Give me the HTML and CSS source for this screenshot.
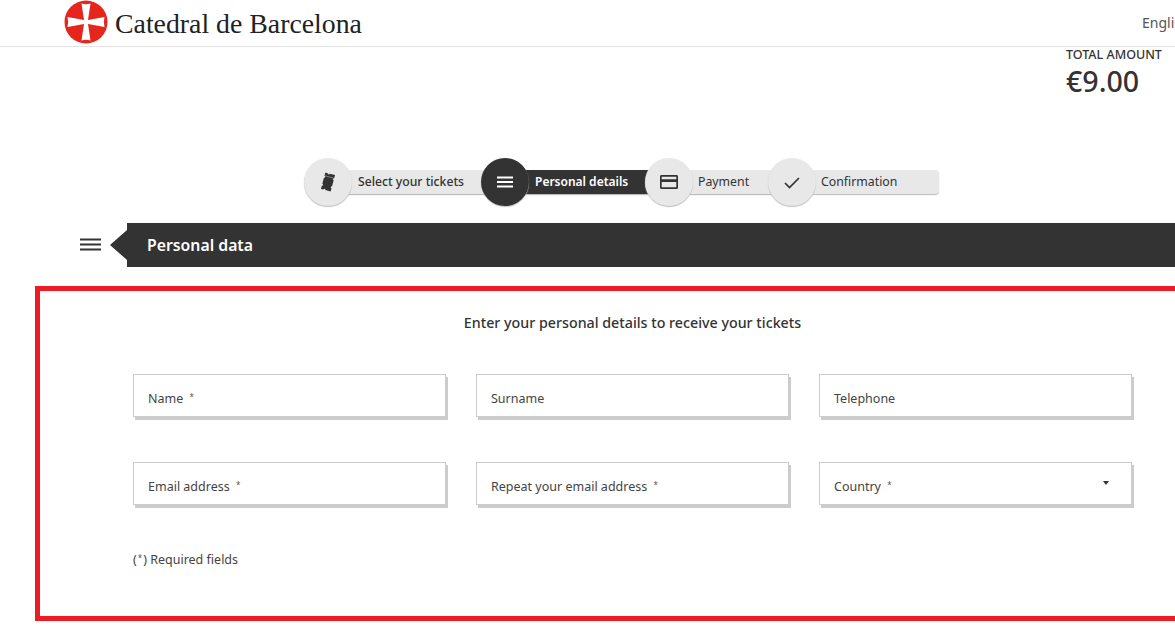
FILE: index.html
```html
<!DOCTYPE html>
<html lang="en">
<head>
  <meta charset="UTF-8" />
  <meta name="viewport" content="width=device-width, initial-scale=1.0" />
  <title>Catedral de Barcelona - Personal details</title>
  <link rel="stylesheet" href="styles.css">
</head>
<body>
  <header class="topbar">
    <div class="brand">
      <svg class="brand-logo" viewBox="0 0 44 44" aria-hidden="true">
        <circle cx="22" cy="22" r="21.500" fill="#e4261d"/>
        <path fill="#fff" d="M17.500 3.500 Q22 4.800 26.500 3.500 L24 20 L40.500 17 Q39.200 22 40.500 27 L24 24 L26.500 40.500 Q22 39.200 17.500 40.500 L20 24 L3.500 27 Q4.800 22 3.500 17 L20 20 Z"/>
      </svg>
      <span class="brand-name">Catedral de Barcelona</span>
    </div>
    <span class="lang">English</span>
  </header>

  <div class="total">
    <p class="total-label">TOTAL AMOUNT</p>
    <p class="total-value">€9.00</p>
  </div>

  <ol class="steps">
    <li class="step step-tickets">
      <span class="step-icon">
        <svg viewBox="0 0 24 24" width="24" height="24"><g transform="rotate(15 12 12)"><path fill="#333" d="M7 3.500h2.500a1 1 0 0 0 2 0H17v3.300a1 1 0 0 0 0 2v6.400a1 1 0 0 0 0 2v3.300h-5.500a1 1 0 0 0-2 0H7v-3.300a1 1 0 0 0 0-2V8.800a1 1 0 0 0 0-2z"/><path stroke="#8a8a8a" stroke-width=".8" d="M7.500 6.800h9"/></g></svg>
      </span>
      <span class="step-label">Select your tickets</span>
    </li>
    <li class="step step-active step-details">
      <span class="step-icon">
        <svg viewBox="0 0 24 24" width="24" height="24"><path fill="none" stroke="#fff" stroke-width="1.800" d="M4 7.500h16M4 12h16M4 16.500h16"/></svg>
      </span>
      <span class="step-label">Personal details</span>
    </li>
    <li class="step step-payment">
      <span class="step-icon">
        <svg viewBox="0 0 24 24" width="24" height="24"><path fill="#333" d="M4.500 5h15c.9 0 1.500.6 1.500 1.500v11c0 .9-.6 1.500-1.500 1.500h-15c-.9 0-1.500-.6-1.500-1.500v-11C3 5.600 3.600 5 4.500 5zm.2 1.800v2.400h14.600V6.800H4.700zm0 5.200v5.200h14.600V12H4.700z"/></svg>
      </span>
      <span class="step-label">Payment</span>
    </li>
    <li class="step step-confirm">
      <span class="step-icon">
        <svg viewBox="0 0 24 24" width="24" height="24"><path fill="none" stroke="#333" stroke-width="1.700" d="M5 13l4.500 4.500L19 8"/></svg>
      </span>
      <span class="step-label">Confirmation</span>
    </li>
  </ol>

  <div class="section-head">
    <svg class="section-menu" viewBox="0 0 22 14" width="22" height="14"><path fill="none" stroke="#333" stroke-width="1.800" d="M0 1.500h21M0 6.500h21M0 11.500h21"/></svg>
    <h2 class="section-title">Personal data</h2>
  </div>

  <form class="details-box">
    <p class="details-intro">Enter your personal details to receive your tickets</p>
    <div class="fields">
      <label class="field">Name <sup>*</sup></label>
      <label class="field">Surname</label>
      <label class="field">Telephone</label>
      <label class="field">Email address <sup>*</sup></label>
      <label class="field">Repeat your email address <sup>*</sup></label>
      <label class="field field-select">Country <sup>*</sup></label>
    </div>
    <p class="required-note">(<sup>*</sup>) Required fields</p>
  </form>
</body>
</html>
```

FILE: styles.css
```css
:root {
  --dark: #333333;
  --step-bg: #e8e8e8;
  --line: #cccccc;
  --red: #ed1c24;
  --font: 'Noto Sans', sans-serif;
}
* {
  box-sizing: border-box;
}
html, body {
  overflow: hidden;
}
body {
  margin: 0;
  height: 627px;
  background: #fff;
  color: var(--dark);
  font-family: var(--font);
  font-size: 12.300px;
}
p {
  margin: 0;
}

/* top bar */
.topbar {
  display: flex;
  align-items: center;
  justify-content: space-between;
  height: 47px;
  padding: 0 0 2px 64px;
  border-bottom: 1px solid #e2e2e2;
}
.brand {
  display: flex;
  align-items: center;
  gap: 7px;
}
.brand-logo {
  width: 44px;
  height: 44px;
}
.brand-name {
  padding-top: 3px;
  font-family: 'Liberation Serif', serif;
  font-size: 27.800px;
  color: #222;
  white-space: nowrap;
}
.lang {
  flex: none;
  width: 33px;
  overflow: hidden;
  font-size: 14px;
  color: #555;
  white-space: nowrap;
}

/* amount */
.total {
  margin-left: 1066px;
  width: 109px;
  height: 111px;
  white-space: nowrap;
}
.total-label {
  font-size: 12.500px;
  font-weight: 500;
  line-height: 16px;
}
.total-value {
  margin-top: 2px;
  font-size: 28.600px;
  font-weight: 500;
  line-height: 32px;
}

/* steps */
.steps {
  display: flex;
  list-style: none;
  margin: 0 0 17px 304px;
  padding: 0;
  height: 48px;
}
.step {
  position: relative;
  display: flex;
  align-items: center;
  height: 48px;
}
.step-tickets { width: 187px; z-index: 1; }
.step-details { width: 174px; margin-left: -10px; z-index: 2; }
.step-payment { width: 133px; margin-left: -10px; z-index: 3; }
.step-confirm { width: 171px; margin-left: -10px; z-index: 4; }
.step-icon {
  flex: none;
  display: flex;
  align-items: center;
  justify-content: center;
  position: relative;
  z-index: 1;
  width: 48px;
  height: 48px;
  border-radius: 50%;
  background: var(--step-bg);
  box-shadow: 0 1px 1px #bbb;
}
.step-label {
  flex: 1;
  height: 24px;
  margin-left: -8px;
  padding-left: 14px;
  line-height: 23px;
  background: var(--step-bg);
  box-shadow: 0 1px 1px #bbb;
  white-space: nowrap;
}
.step-tickets .step-label {
  font-weight: 500;
  font-size: 12.200px;
}
.step-confirm .step-label {
  padding-left: 13px;
  border-radius: 0 4px 4px 0;
}
.step-payment .step-label {
  padding-left: 13px;
}
.step-active .step-icon,
.step-active .step-label {
  background: var(--dark);
  color: #fff;
  font-weight: 600;
  font-size: 12px;
}

/* section heading */
.section-head {
  display: flex;
  align-items: center;
  height: 44px;
  margin: 0 0 19px 80px;
  gap: 25px;
}
.section-menu {
  flex: none;
}
.section-title {
  position: relative;
  flex: 1;
  height: 44px;
  margin: 0;
  padding-left: 20px;
  background: var(--dark);
  color: #fff;
  font-size: 15.800px;
  font-weight: 600;
  line-height: 44px;
}
.section-title::before {
  content: "";
  position: absolute;
  left: -17px;
  top: 7px;
  border: 15px solid transparent;
  border-left: 0;
  border-right: 17px solid var(--dark);
}

/* form */
.details-box {
  width: 1195px;
  height: 335px;
  margin-left: 35px;
  padding: 22px 0 0 93px;
  border: 5px solid var(--red);
}
.details-intro {
  margin-left: -93px;
  font-size: 14.250px;
  font-weight: 500;
  line-height: 20px;
  text-align: center;
}
.fields {
  display: grid;
  grid-template-columns: repeat(3, 313px);
  grid-auto-rows: 43px;
  column-gap: 30px;
  row-gap: 45px;
  margin-top: 41px;
}
.field {
  position: relative;
  display: block;
  padding: 15px 14px 0;
  border: 1px solid var(--line);
  box-shadow: 2px 3px 0 var(--line);
  font-size: 12.500px;
  line-height: 17px;
  color: #444;
}
sup {
  font-size: 8px;
  line-height: 0;
  margin-left: 3px;
  color: #555;
  vertical-align: 3px;
}
.field-select::after {
  content: "";
  position: absolute;
  right: 22px;
  top: 18px;
  border: 3.500px solid transparent;
  border-bottom: 0;
  border-top: 4px solid var(--dark);
}
.required-note {
  margin-top: 46px;
  font-size: 12.500px;
  line-height: 18px;
  color: #444;
}
.required-note sup {
  margin: 0 1px;
}
```
